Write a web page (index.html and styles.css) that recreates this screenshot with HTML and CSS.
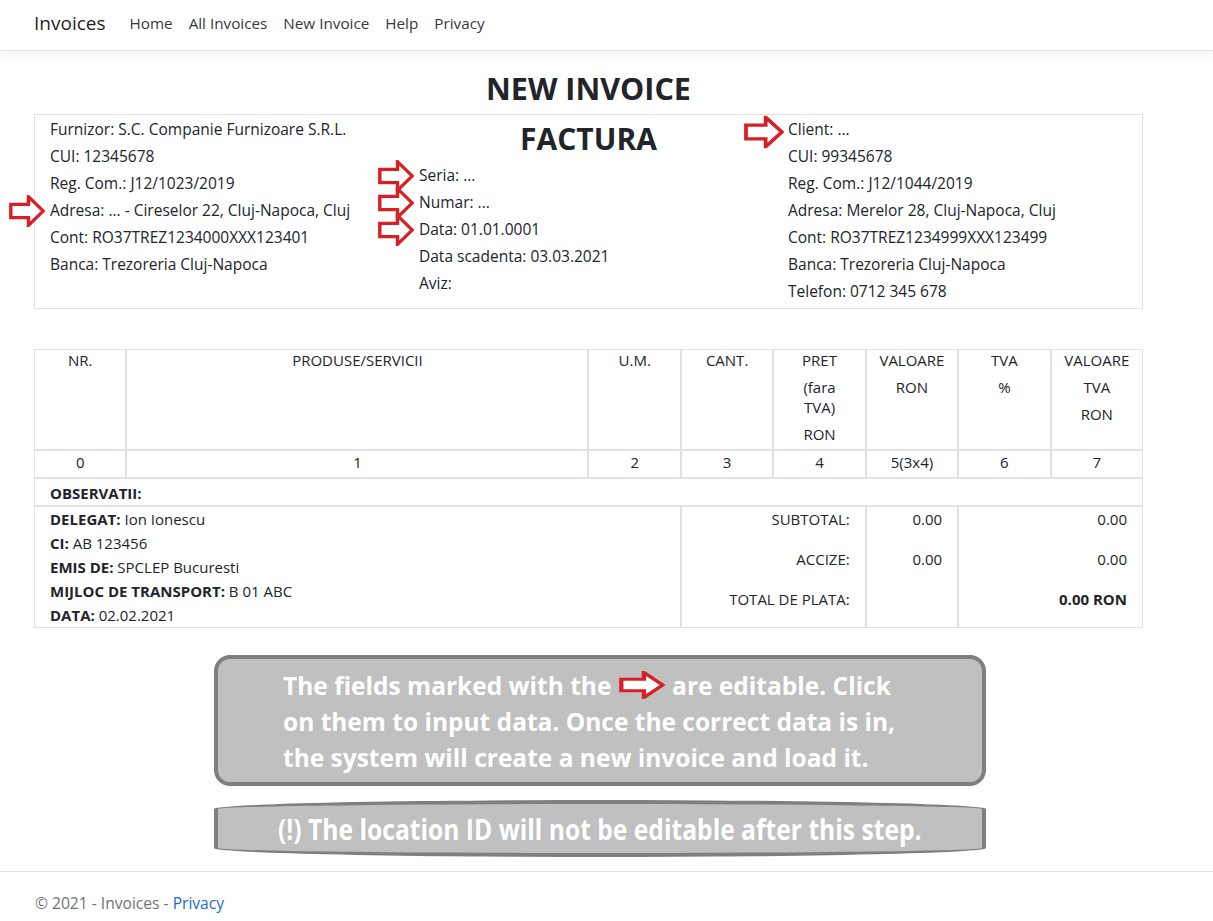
FILE: index.html
```html
<!DOCTYPE html>
<html lang="ro">
<head>
<meta charset="utf-8">
<title>New Invoice - Invoices</title>
<link rel="stylesheet" href="styles.css">
</head>
<body>
<svg class="defs" width="0" height="0" aria-hidden="true">
  <symbol id="edit-arrow" viewBox="0 0 36 34" preserveAspectRatio="none">
    <path d="M1.8 10 H19.5 V1.8 L34.2 17 L19.5 32.2 V24 H1.8 Z" fill="#fff" stroke="#d81f26" stroke-width="3.4" stroke-linejoin="miter"/>
  </symbol>
</svg>

<header class="navbar">
  <a class="brand" href="#">Invoices</a>
  <nav class="nav-links">
    <a href="#">Home</a>
    <a href="#">All Invoices</a>
    <a href="#">New Invoice</a>
    <a href="#">Help</a>
    <a href="#">Privacy</a>
  </nav>
</header>

<main class="container">
  <h1 class="page-title">NEW INVOICE</h1>

  <section class="parties">
    <div class="party">
      <div class="field">Furnizor: S.C. Companie Furnizoare S.R.L.</div>
      <div class="field">CUI: 12345678</div>
      <div class="field">Reg. Com.: J12/1023/2019</div>
      <div class="field editable"><svg class="arrow"><use href="#edit-arrow"/></svg>Adresa: ... - Cireselor 22, Cluj-Napoca, Cluj</div>
      <div class="field">Cont: RO37TREZ1234000XXX123401</div>
      <div class="field">Banca: Trezoreria Cluj-Napoca</div>
    </div>
    <div class="party invoice-meta">
      <h2 class="doc-title">FACTURA</h2>
      <div class="field editable"><svg class="arrow"><use href="#edit-arrow"/></svg>Seria: ...</div>
      <div class="field editable"><svg class="arrow"><use href="#edit-arrow"/></svg>Numar: ...</div>
      <div class="field editable"><svg class="arrow"><use href="#edit-arrow"/></svg>Data: 01.01.0001</div>
      <div class="field">Data scadenta: 03.03.2021</div>
      <div class="field">Aviz:</div>
    </div>
    <div class="party">
      <div class="field editable client"><svg class="arrow"><use href="#edit-arrow"/></svg>Client: ...</div>
      <div class="field">CUI: 99345678</div>
      <div class="field">Reg. Com.: J12/1044/2019</div>
      <div class="field">Adresa: Merelor 28, Cluj-Napoca, Cluj</div>
      <div class="field">Cont: RO37TREZ1234999XXX123499</div>
      <div class="field">Banca: Trezoreria Cluj-Napoca</div>
      <div class="field">Telefon: 0712 345 678</div>
    </div>
  </section>

  <section class="items">
    <div class="cell head"><p>NR.</p></div>
    <div class="cell head span-5"><p>PRODUSE/SERVICII</p></div>
    <div class="cell head"><p>U.M.</p></div>
    <div class="cell head"><p>CANT.</p></div>
    <div class="cell head"><p>PRET</p><p>(fara<br>TVA)</p><p>RON</p></div>
    <div class="cell head"><p>VALOARE</p><p>RON</p></div>
    <div class="cell head"><p>TVA</p><p>%</p></div>
    <div class="cell head"><p>VALOARE</p><p>TVA</p><p>RON</p></div>

    <div class="cell num">0</div>
    <div class="cell num span-5">1</div>
    <div class="cell num">2</div>
    <div class="cell num">3</div>
    <div class="cell num">4</div>
    <div class="cell num">5(3x4)</div>
    <div class="cell num">6</div>
    <div class="cell num">7</div>

    <div class="cell obs span-12"><b>OBSERVATII:</b></div>

    <div class="cell delegate span-7">
      <div><b>DELEGAT:</b> Ion Ionescu</div>
      <div><b>CI:</b> AB 123456</div>
      <div><b>EMIS DE:</b> SPCLEP Bucuresti</div>
      <div><b>MIJLOC DE TRANSPORT:</b> B 01 ABC</div>
      <div><b>DATA:</b> 02.02.2021</div>
    </div>
    <div class="cell totals span-2">
      <div>SUBTOTAL:</div>
      <div>ACCIZE:</div>
      <div>TOTAL DE PLATA:</div>
    </div>
    <div class="cell totals">
      <div>0.00</div>
      <div>0.00</div>
      <div>&nbsp;</div>
    </div>
    <div class="cell totals span-2">
      <div>0.00</div>
      <div>0.00</div>
      <div><b>0.00 RON</b></div>
    </div>
  </section>

  <div class="callout">
    <p>The fields marked with the <svg class="inline-arrow"><use href="#edit-arrow"/></svg> are editable. Click<br>on them to input data. Once the correct data is in,<br>the system will create a new invoice and load it.</p>
  </div>

  <div class="callout-warning">
    <span>(!) The location ID will not be editable after this step.</span>
  </div>
</main>

<footer class="footer">
  &copy; 2021 - Invoices - <a href="#">Privacy</a>
</footer>
</body>
</html>
```

FILE: styles.css
```css
html, body {
  margin: 0;
  padding: 0;
}

body {
  font-family: "Open Sans", "Noto Sans", sans-serif;
  font-size: 15px;
  color: #212529;
  background: #fff;
}

.defs {
  position: absolute;
  width: 0;
  height: 0;
  overflow: hidden;
}

/* Navbar */
.navbar {
  height: 51px;
  box-sizing: border-box;
  display: flex;
  align-items: center;
  padding: 0 0 5px 34px;
  border-bottom: 1px solid #e5e5e5;
  box-shadow: 0 4px 12px rgba(0, 0, 0, 0.05);
}

.brand {
  font-size: 19px;
  color: rgba(0, 0, 0, 0.9);
  text-decoration: none;
  margin-right: 16px;
}

.nav-links {
  display: flex;
}

.nav-links a {
  padding: 0 8px;
  color: #343a40;
  text-decoration: none;
  font-size: 15.25px;
}

/* Main */
.container {
  width: 1109px;
  margin-left: 34px;
}

.page-title {
  margin: 0;
  padding-top: 14px;
  padding-bottom: 3px;
  line-height: 46px;
  font-size: 30.5px;
  font-weight: 700;
  text-align: center;
}

.parties {
  display: grid;
  grid-template-columns: repeat(3, 1fr);
  border: 1px solid #dee2e6;
  padding: 1px 0 3px;
  font-size: 15.5px;
}

.party {
  padding: 0 15px;
}

.field {
  line-height: 27px;
  position: relative;
}

.editable .arrow {
  position: absolute;
  right: 100%;
  top: 50%;
  width: 36px;
  height: 32px;
  margin-right: 5px;
  transform: translateY(-50%);
}

.editable.client .arrow {
  width: 40px;
  height: 33px;
  margin-right: 4px;
  margin-top: 2px;
}

.doc-title {
  margin: 0;
  font-size: 30px;
  font-weight: 700;
  line-height: 46px;
  text-align: center;
}

/* Items table */
.items {
  margin-top: 40px;
  display: grid;
  grid-template-columns: repeat(12, 1fr);
}

.cell {
  border: 1px solid #dee2e6;
  min-width: 0;
}

.span-2 { grid-column: span 2; }
.span-5 { grid-column: span 5; }
.span-7 { grid-column: span 7; }
.span-12 { grid-column: span 12; }

.head {
  text-align: center;
}

.head p {
  margin: 0 0 7px;
  line-height: 20px;
}

.head p:last-child {
  margin-bottom: 5px;
}

.num {
  text-align: center;
  line-height: 20px;
  padding: 1px 0 5px;
}

.obs {
  line-height: 20px;
  padding: 4px 15px 2px;
}

.delegate {
  padding: 0 15px;
  line-height: 24px;
}

.totals {
  text-align: right;
  padding: 0 15px;
}

.totals div {
  line-height: 24px;
  margin-bottom: 16px;
}

.totals div:last-child {
  margin-bottom: 0;
}

/* Callouts */
.callout {
  margin: 27px 0 0 180px;
  width: 772px;
  box-sizing: border-box;
  height: 131px;
  border: 4px solid #7f7f7f;
  border-radius: 16px;
  background: #c0c0c0;
  padding: 9px 0 0 65px;
}

.callout p {
  margin: 0;
  color: #fff;
  font-size: 24.5px;
  font-weight: 700;
  line-height: 36px;
}

.inline-arrow {
  width: 46px;
  height: 28px;
  vertical-align: -4px;
  margin: 0 1px;
}

.callout-warning {
  margin: 14px 0 0 180px;
  width: 772px;
  height: 57px;
  box-sizing: border-box;
  border: 4px solid #7f7f7f;
  border-radius: 50% / 9px;
  background: #c0c0c0;
  display: flex;
  align-items: center;
  justify-content: center;
}

.callout-warning span {
  color: #fff;
  font-size: 28px;
  font-weight: 700;
  display: inline-block;
  transform: scaleX(0.88);
  white-space: nowrap;
}

/* Footer */
.footer {
  margin-top: 14px;
  border-top: 1px solid #dee2e6;
  padding: 19px 0 0 35px;
  line-height: 24px;
  color: #6c757d;
  font-size: 15.6px;
  height: 60px;
}

.footer a {
  color: #1b6ec2;
  text-decoration: none;
}
```
